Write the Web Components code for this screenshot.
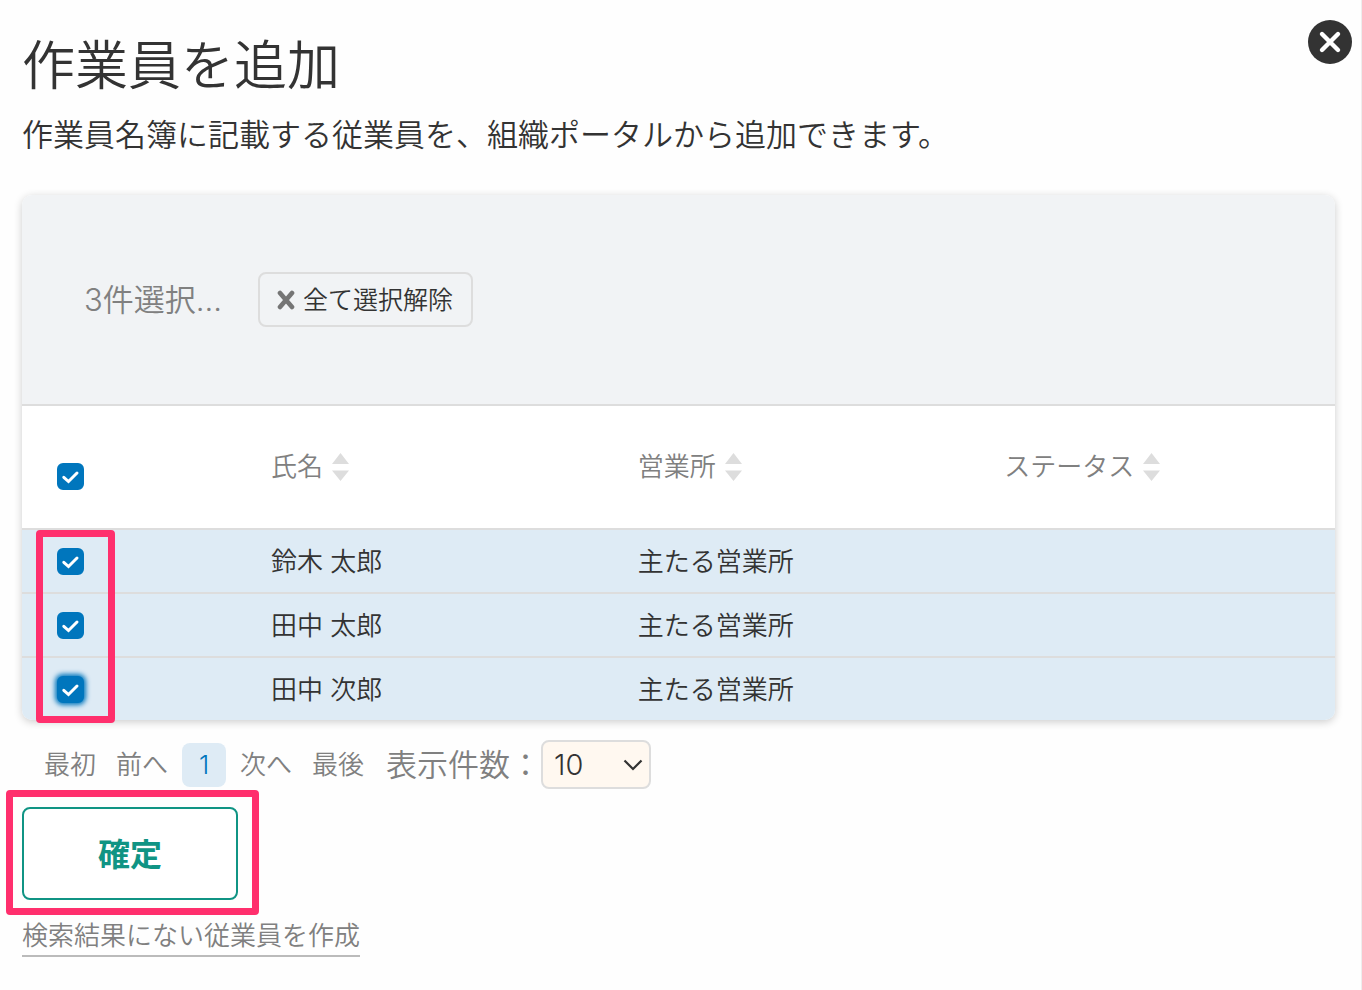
<!DOCTYPE html>
<html lang="ja">
<head>
<meta charset="UTF-8">
<meta name="viewport" content="width=device-width, initial-scale=1">
<title>作業員を追加</title>
<style>
    body {
        margin: 0;
        background: #fefefe;
        color: #333;
        font-family: Inter, "Noto Sans CJK JP", sans-serif;
        font-weight: 350;
    }
</style>
</head>
<body>
<worker-dialog>
    <span slot="title">作業員を追加</span>
    <span slot="description">作業員名簿に記載する従業員を、組織ポータルから追加できます。</span>
    <worker-table></worker-table>
    <table-pager></table-pager>
    <mark-frame><confirm-button>確定</confirm-button></mark-frame>
    <create-link>検索結果にない従業員を作成</create-link>
</worker-dialog>

<script>
class WorkerDialog extends HTMLElement {
    constructor() {
        super();
        this.attachShadow({ mode: 'open' });
        this.shadowRoot.innerHTML = `
            <style>
                :host {
                    display: block;
                    box-sizing: border-box;
                    min-height: 100vh;
                    padding: 20px 26px 24px 22px;
                    border-right: 1px solid #eee;
                }
                header {
                    display: flex;
                    justify-content: space-between;
                    align-items: flex-start;
                    margin-right: -17px;
                }
                h1 {
                    margin: 0;
                    padding-top: 14px;
                    font-size: 53px;
                    font-weight: 350;
                    line-height: 64px;
                }
                p {
                    margin: 14px 0 38px;
                    font-size: 31px;
                    line-height: 45px;
                }
                button {
                    padding: 0;
                    border: 0;
                    background: none;
                    cursor: pointer;
                }
                svg {
                    display: block;
                }
            </style>
            <header>
                <h1><slot name="title"></slot></h1>
                <button type="button" aria-label="閉じる">
                    <svg width="44" height="44" viewBox="0 0 44 44">
                        <circle cx="22" cy="22" r="22" fill="#333"/>
                        <path d="M14 14 L30 30 M30 14 L14 30" stroke="#fff" stroke-width="4.4" stroke-linecap="round"/>
                    </svg>
                </button>
            </header>
            <p><slot name="description"></slot></p>
            <slot></slot>
        `;
        this.shadowRoot.querySelector('button').addEventListener('click', () => this.remove());
    }
}

class CheckBox extends HTMLElement {
    constructor() {
        super();
        this.attachShadow({ mode: 'open' });
        this.shadowRoot.innerHTML = `
            <style>
                :host {
                    display: inline-grid;
                    vertical-align: middle;
                }
                input, svg {
                    grid-area: 1 / 1;
                    width: 27px;
                    height: 27px;
                }
                input {
                    appearance: none;
                    box-sizing: border-box;
                    margin: 0;
                    border: 2px solid #ccc;
                    border-radius: 6px;
                    background: #fff;
                    outline: none;
                }
                input:checked {
                    border-color: #0076bd;
                    background: #0076bd;
                }
                :host([active]) input {
                    box-shadow: 0 0 5px 2px #0076bd;
                }
                svg {
                    position: relative;
                    pointer-events: none;
                }
            </style>
            <input type="checkbox" checked aria-label="${this.getAttribute('label')}">
            <svg viewBox="0 0 27 27">
                <path d="M6.8 14.3 L11.5 18.5 L20 10" fill="none" stroke="#fff" stroke-width="3" stroke-linecap="round"/>
            </svg>
        `;
    }
}

class SortIcon extends HTMLElement {
    constructor() {
        super();
        this.attachShadow({ mode: 'open' });
        this.shadowRoot.innerHTML = `
            <style>
                :host {
                    display: block;
                }
                svg {
                    display: block;
                }
            </style>
            <svg width="17" height="28" viewBox="0 0 17 28">
                <path d="M0 11 L8.5 0 L17 11 Z M0 17.5 H17 L8.5 28 Z" fill="#ddd"/>
            </svg>
        `;
    }
}

class MarkFrame extends HTMLElement {
    constructor() {
        super();
        this.attachShadow({ mode: 'open' });
        this.shadowRoot.innerHTML = `
            <style>
                :host {
                    display: block;
                    box-sizing: border-box;
                    width: fit-content;
                    margin: 1px 0 0 -16px;
                    padding: 10px 14px 8px 9px;
                    border: 7px solid #ff2f6d;
                    border-radius: 4px;
                }
            </style>
            <slot></slot>
        `;
    }
}

class WorkerTable extends HTMLElement {
    constructor() {
        super();
        this.attachShadow({ mode: 'open' });
        this.columns = ['氏名', '営業所', 'ステータス'];
        this.workers = [
            { name: '鈴木 太郎', office: '主たる営業所', status: '' },
            { name: '田中 太郎', office: '主たる営業所', status: '' },
            { name: '田中 次郎', office: '主たる営業所', status: '' }
        ];
        this.shadowRoot.innerHTML = `
            <style>
                :host {
                    display: block;
                    position: relative;
                    border-radius: 10px;
                    background: #fff;
                    box-shadow: 0 2px 8px rgba(0, 0, 0, 0.2);
                }
                .toolbar {
                    display: flex;
                    align-items: center;
                    gap: 36px;
                    box-sizing: border-box;
                    min-height: 211px;
                    padding: 0 62px;
                    border-bottom: 2px solid #ddd;
                    border-radius: 10px 10px 0 0;
                    background: #f1f3f5;
                }
                .count {
                    color: #808080;
                    font-size: 31px;
                    line-height: 45px;
                }
                button {
                    font: inherit;
                    color: inherit;
                    cursor: pointer;
                }
                .clear {
                    display: flex;
                    align-items: center;
                    gap: 8px;
                    padding: 9px 18px 8px 17px;
                    border: 2px solid #ddd;
                    border-radius: 8px;
                    background: none;
                    font-size: 25px;
                    line-height: 34px;
                }
                table {
                    width: 100%;
                    border-spacing: 0;
                    table-layout: fixed;
                    font-size: 26px;
                    line-height: 38px;
                }
                th, td {
                    padding: 13px 36px 11px;
                    text-align: left;
                    font-weight: 350;
                }
                th {
                    height: 80px;
                    padding-top: 21px;
                    padding-bottom: 21px;
                }
                td {
                    border-top: 2px solid #ddd;
                    background: #deebf5;
                }
                td:first-child, th:first-child {
                    width: 142px;
                    padding: 12px 36px 12px 35px;
                    line-height: 0;
                }
                th:first-child {
                    padding-top: 30px;
                }
                tr:last-child td:first-child {
                    border-bottom-left-radius: 10px;
                }
                tr:last-child td:last-child {
                    border-bottom-right-radius: 10px;
                }
                .sort {
                    display: flex;
                    align-items: center;
                    gap: 9px;
                    padding: 0;
                    border: 0;
                    background: none;
                    color: #808080;
                    white-space: nowrap;
                }
                .mark {
                    position: absolute;
                    bottom: -3px;
                    left: 14px;
                    width: 79px;
                    height: 193px;
                    margin: 0;
                    pointer-events: none;
                }
            </style>
            <div class="toolbar">
                <span class="count">3件選択...</span>
                <button class="clear" type="button">
                    <svg width="18" height="20" viewBox="0 0 18 20">
                        <path d="M3 3 L15 17 M15 3 L3 17" stroke="#757575" stroke-width="4.6" stroke-linecap="round"/>
                    </svg>
                    全て選択解除
                </button>
            </div>
            <table>
                <thead>
                    <tr>
                        <th><check-box label="全て選択"></check-box></th>
                        ${this.columns.map(column => `
                            <th><button class="sort" type="button">${column}<sort-icon></sort-icon></button></th>
                        `).join('')}
                    </tr>
                </thead>
                <tbody>
                    ${this.workers.map((worker, index) => `
                        <tr>
                            <td><check-box label="${worker.name}" ${index === 2 ? 'active' : ''}></check-box></td>
                            <td>${worker.name}</td>
                            <td>${worker.office}</td>
                            <td>${worker.status}</td>
                        </tr>
                    `).join('')}
                </tbody>
            </table>
            <mark-frame class="mark"></mark-frame>
        `;
        this.shadowRoot.querySelector('.clear').addEventListener('click', this.clearAll.bind(this));
    }

    clearAll() {
        this.shadowRoot.querySelectorAll('check-box').forEach(box => {
            box.shadowRoot.querySelector('input').checked = false;
        });
    }
}

class TablePager extends HTMLElement {
    constructor() {
        super();
        this.attachShadow({ mode: 'open' });
        this.shadowRoot.innerHTML = `
            <style>
                :host {
                    display: flex;
                    align-items: center;
                    margin-top: 20px;
                    padding-left: 12px;
                    color: #808080;
                    font-size: 26px;
                    line-height: 44px;
                }
                nav {
                    display: flex;
                    margin-right: 12px;
                }
                a {
                    padding: 0 10px;
                    color: inherit;
                    text-decoration: none;
                }
                a[aria-current] {
                    width: 44px;
                    margin: 0 4px;
                    padding: 0;
                    border-radius: 8px;
                    background: #deebf5;
                    color: #0076bd;
                    text-align: center;
                }
                label {
                    font-size: 31px;
                }
                .size {
                    display: grid;
                    align-items: center;
                }
                select, svg {
                    grid-area: 1 / 1;
                }
                select {
                    appearance: none;
                    box-sizing: border-box;
                    width: 110px;
                    height: 49px;
                    padding: 0 36px 0 11px;
                    border: 2px solid #ddd;
                    border-radius: 8px;
                    background: #fff8f0;
                    color: #333;
                    font: inherit;
                    font-size: 29px;
                    line-height: 44px;
                }
                svg {
                    justify-self: end;
                    margin-right: 8px;
                    pointer-events: none;
                    position: relative;
                }
            </style>
            <nav>
                <a href="#first">最初</a>
                <a href="#prev">前へ</a>
                <a href="#1" aria-current="page">1</a>
                <a href="#next">次へ</a>
                <a href="#last">最後</a>
            </nav>
            <label for="size">表示件数：</label>
            <div class="size">
                <select id="size">
                    <option>10</option>
                    <option>20</option>
                    <option>50</option>
                </select>
                <svg width="20" height="12" viewBox="0 0 20 12">
                    <path d="M1.5 1.5 L10 10 L18.5 1.5" fill="none" stroke="#333" stroke-width="2.2"/>
                </svg>
            </div>
        `;
    }
}

class ConfirmButton extends HTMLElement {
    constructor() {
        super();
        this.attachShadow({ mode: 'open' });
        this.shadowRoot.innerHTML = `
            <style>
                :host {
                    display: block;
                }
                button {
                    display: block;
                    min-width: 216px;
                    padding: 24px 32px 21px;
                    border: 2px solid #109484;
                    border-radius: 8px;
                    background: #fff;
                    color: #109484;
                    font: inherit;
                    font-size: 32px;
                    font-weight: 700;
                    line-height: 44px;
                    cursor: pointer;
                }
            </style>
            <button type="button"><slot></slot></button>
        `;
    }
}

class CreateLink extends HTMLElement {
    constructor() {
        super();
        this.attachShadow({ mode: 'open' });
        this.shadowRoot.innerHTML = `
            <style>
                :host {
                    display: flex;
                    margin-top: 2px;
                }
                a {
                    border-bottom: 2px solid #bbb;
                    color: #808080;
                    font-size: 26px;
                    line-height: 38px;
                    text-decoration: none;
                }
            </style>
            <a href="#create"><slot></slot></a>
        `;
    }
}

customElements.define('check-box', CheckBox);
customElements.define('sort-icon', SortIcon);
customElements.define('mark-frame', MarkFrame);
customElements.define('worker-table', WorkerTable);
customElements.define('table-pager', TablePager);
customElements.define('confirm-button', ConfirmButton);
customElements.define('create-link', CreateLink);
customElements.define('worker-dialog', WorkerDialog);
</script>
</body>
</html>
